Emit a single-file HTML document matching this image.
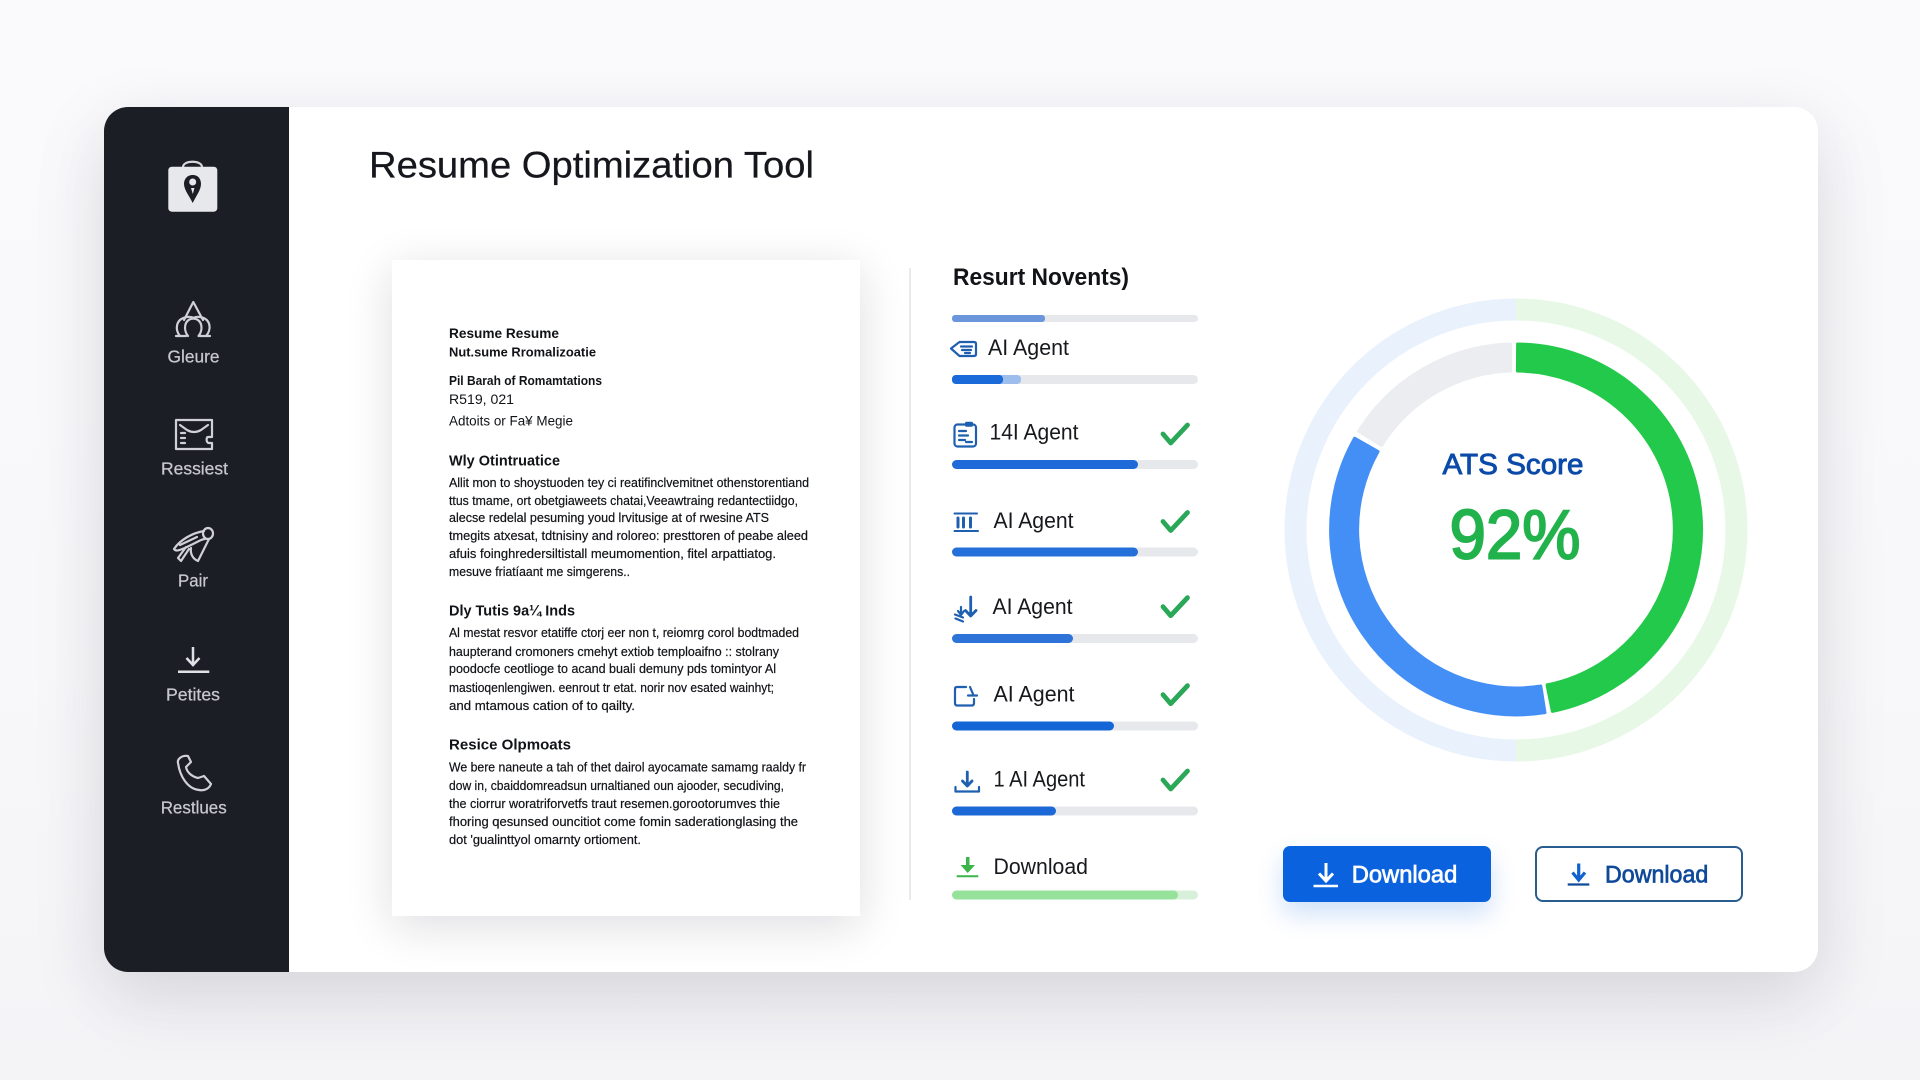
<!DOCTYPE html>
<html lang="en"><head><meta charset="utf-8"><title>Resume Optimization Tool</title>
<style>
html,body{margin:0;padding:0;width:1920px;height:1080px;overflow:hidden;background:linear-gradient(#fafafc 0,#f8f8fa 60%,#f4f4f7 100%);font-family:"Liberation Sans",sans-serif}
.a{position:absolute}
#card{left:104px;top:107px;width:1714px;height:865px;background:#fff;border-radius:24px;box-shadow:0 24px 70px rgba(25,25,45,.15)}
#side{left:104px;top:107px;width:185px;height:865px;background:#1c1e26;border-radius:24px 0 0 24px}
#paper{left:392px;top:260px;width:468px;height:656px;background:#fff;box-shadow:0 10px 44px rgba(20,20,40,.14)}
#b1{left:1283px;top:846px;width:208px;height:56px;background:#0a62de;border-radius:7px;box-shadow:0 12px 26px rgba(10,98,222,.2)}
#b2{left:1535px;top:846px;width:204px;height:52px;border:2px solid #2a5d8f;border-radius:8px;background:#fff}
svg{position:absolute;left:0;top:0}
text{font-family:"Liberation Sans",sans-serif}
</style></head><body>
<div class="a" id="card"></div><div class="a" id="side"></div><div class="a" id="paper"></div><div class="a" id="b1"></div><div class="a" id="b2"></div>
<svg width="1920" height="1080" viewBox="0 0 1920 1080">
<text x="369" y="177.500" font-size="37" fill="#15171c" stroke="#15171c" stroke-width=".25" textLength="445" lengthAdjust="spacingAndGlyphs">Resume Optimization Tool</text>

<!-- sidebar logo -->
<path d="M183 167C183 160 202 160 202 167" fill="none" stroke="#d6d7db" stroke-width="2.200"/>
<rect x="168.300" y="166.700" width="49" height="45" rx="3.500" fill="#e7e8eb"/>
<path d="M192.700 175C186.500 175 184 180 184 184C184 190 190 197 192.700 203C195.500 197 201 190 201 184C201 180 199 175 192.700 175Z" fill="#1c1e26"/>
<circle cx="192.700" cy="182" r="3.500" fill="#e7e8eb"/><path d="M191 188h3.500l-1.700 6z" fill="#e7e8eb"/>

<g fill="none" stroke="#cfd1d6" stroke-width="2.200" stroke-linecap="round" stroke-linejoin="round">
<path d="M184 320L193.300 302L203 320"/>
<path d="M176 336H186M180 336C175 330 175 319 187 317C190 316.500 192 317 194 318M210 336H200M206 336C211.500 330 211.500 319 200 317C197 316.500 195 317 193 318M188 336C183 330 184 319 193.300 318.500C202.500 319 203.500 330 198.500 336"/>
<path d="M176 420H212V437H208C206 437 206 443 209 443H212V449H176Z"/>
<path d="M180 425L187 430Q194 434 201 430L208 425M181 433H185M181 438H185M181 443H185"/>
<ellipse cx="208" cy="533.500" rx="5" ry="5.500"/>
<path d="M204 531C192 533 180 540 174 549C176 552 180 550 187 547L199 541C201 540 203 539 205 539M209 539C205 547 201 555 198 561C193 559 190 554 191 548M189 549L181 561L178 558L186 547M180 545L197 537"/>
<path d="M178 763C177 759 182 755 188 756L191 762L186 767C187 773 193 777 198 778L204 776L211 784C209 789 204 791 199 790C188 789 180 777 178 763Z"/>
</g>
<path d="M193 647V664M186.500 658L193 665L199.500 658" fill="none" stroke="#e0e1e5" stroke-width="2.500"/>
<path d="M178 671.700H209.300" stroke="#e0e1e5" stroke-width="2.500"/>
<g fill="#c6c8ce" stroke="#c6c8ce" stroke-width=".25" font-size="17.500">
<text x="167.500" y="362.500" textLength="52" lengthAdjust="spacingAndGlyphs">Gleure</text>
<text x="161" y="474.500" textLength="67" lengthAdjust="spacingAndGlyphs">Ressiest</text>
<text x="178" y="586.500" textLength="30" lengthAdjust="spacingAndGlyphs">Pair</text>
<text x="166" y="700.500" textLength="54" lengthAdjust="spacingAndGlyphs">Petites</text>
<text x="160.700" y="813.500" textLength="66" lengthAdjust="spacingAndGlyphs">Restlues</text>
</g>

<!-- resume text -->
<g fill="#111317">
<g font-weight="700">
<text x="449" y="338" font-size="14" textLength="110" lengthAdjust="spacingAndGlyphs">Resume Resume</text>
<text x="449" y="356.500" font-size="13" textLength="147" lengthAdjust="spacingAndGlyphs">Nut.sume Rromalizoatie</text>
<text x="449" y="385" font-size="13" textLength="153" lengthAdjust="spacingAndGlyphs">Pil Barah of Romamtations</text>
<text x="449" y="465.500" font-size="15" textLength="111" lengthAdjust="spacingAndGlyphs">Wly Otintruatice</text>
<text x="449" y="615.500" font-size="15" textLength="126" lengthAdjust="spacingAndGlyphs">Dly Tutis 9a¼ Inds</text>
<text x="449" y="749.500" font-size="15" textLength="122" lengthAdjust="spacingAndGlyphs">Resice Olpmoats</text>
</g>
<text x="449" y="404" font-size="14" textLength="65" lengthAdjust="spacingAndGlyphs">R519, 021</text>
<text x="449" y="425.500" font-size="13.500" textLength="124" lengthAdjust="spacingAndGlyphs">Adtoits or Fa¥ Megie</text>
<g font-size="12.800" stroke="#111317" stroke-width=".2">
<text x="449" y="487" textLength="360" lengthAdjust="spacingAndGlyphs">Allit mon to shoystuoden tey ci reatifinclvemitnet othenstorentiand</text>
<text x="449" y="505" textLength="349" lengthAdjust="spacingAndGlyphs">ttus tmame, ort obetgiaweets chatai,Veeawtraing redantectiidgo,</text>
<text x="449" y="522" textLength="320" lengthAdjust="spacingAndGlyphs">alecse redelal pesuming youd lrvitusige at of rwesine ATS</text>
<text x="449" y="540" textLength="359" lengthAdjust="spacingAndGlyphs">tmegits atxesat, tdtnisiny and roloreo: presttoren of peabe aleed</text>
<text x="449" y="558" textLength="327" lengthAdjust="spacingAndGlyphs">afuis foinghredersiltistall meumomention, fitel arpattiatog.</text>
<text x="449" y="576" textLength="181" lengthAdjust="spacingAndGlyphs">mesuve friatíaant me simgerens..</text>
<text x="449" y="637" textLength="350" lengthAdjust="spacingAndGlyphs">Al mestat resvor etatiffe ctorj eer non t, reiomrg corol bodtmaded</text>
<text x="449" y="656" textLength="330" lengthAdjust="spacingAndGlyphs">haupterand cromoners cmehyt extiob temploaifno :: stolrany</text>
<text x="449" y="673" textLength="327" lengthAdjust="spacingAndGlyphs">poodocfe ceotlioge to acand buali demuny pds tomintyor Al</text>
<text x="449" y="692" textLength="325" lengthAdjust="spacingAndGlyphs">mastioqenlengiwen. eenrout tr etat. norir nov esated wainhyt;</text>
<text x="449" y="710" textLength="186" lengthAdjust="spacingAndGlyphs">and  mtamous cation of to qailty.</text>
<text x="449" y="771.500" textLength="357" lengthAdjust="spacingAndGlyphs">We bere naneute a tah of thet dairol ayocamate samamg raaldy fr</text>
<text x="449" y="790" textLength="335" lengthAdjust="spacingAndGlyphs">dow in, cbaiddomreadsun urnaltianed oun ajooder, secudiving,</text>
<text x="449" y="808" textLength="331" lengthAdjust="spacingAndGlyphs">the ciorrur woratriforvetfs traut resemen.gorootorumves thie</text>
<text x="449" y="826" textLength="349" lengthAdjust="spacingAndGlyphs">fhoring qesunsed ouncitiot come fomin saderationglasing the</text>
<text x="449" y="844" textLength="192" lengthAdjust="spacingAndGlyphs">dot 'gualinttyol omarnty ortioment.</text>
</g></g>

<path d="M910 268V900" stroke="#e8eaee" stroke-width="2"/>

<!-- results -->
<text x="953" y="285" font-size="24" font-weight="700" fill="#111317" textLength="176" lengthAdjust="spacingAndGlyphs">Resurt Novents)</text>
<g fill="#e6e8ec">
<rect x="952" y="315" width="246" height="7" rx="3.500"/>
<rect x="952" y="375" width="246" height="9" rx="4.500"/>
<rect x="952" y="460" width="246" height="9" rx="4.500"/>
<rect x="952" y="547.500" width="246" height="9" rx="4.500"/>
<rect x="952" y="634" width="246" height="9" rx="4.500"/>
<rect x="952" y="721.500" width="246" height="9" rx="4.500"/>
<rect x="952" y="806.500" width="246" height="9" rx="4.500"/>
</g>
<rect x="952" y="890.500" width="246" height="9" rx="4.500" fill="#d8f0da"/>
<rect x="952" y="315" width="93" height="7" rx="3" fill="#6b96db"/>
<rect x="952" y="375" width="69" height="9" rx="4" fill="#9dbdec"/>
<rect x="952" y="375" width="51" height="9" rx="4" fill="#1a6ad9"/>
<rect x="952" y="460" width="186" height="9" rx="4.500" fill="#1d6ad8"/>
<rect x="952" y="547.500" width="186" height="9" rx="4.500" fill="#2370da"/>
<rect x="952" y="634" width="121" height="9" rx="4.500" fill="#2e74d8"/>
<rect x="952" y="721.500" width="162" height="9" rx="4.500" fill="#1466d6"/>
<rect x="952" y="806.500" width="104" height="9" rx="4.500" fill="#1c68d6"/>
<rect x="952" y="890.500" width="226" height="9" rx="4.500" fill="#96e29b"/>

<g font-size="22" fill="#17191d">
<text x="988" y="355" textLength="81" lengthAdjust="spacingAndGlyphs">AI Agent</text>
<text x="989.500" y="439.300" textLength="89" lengthAdjust="spacingAndGlyphs">14I Agent</text>
<text x="993.500" y="528" textLength="80" lengthAdjust="spacingAndGlyphs">AI Agent</text>
<text x="992.500" y="614" textLength="80" lengthAdjust="spacingAndGlyphs">AI Agent</text>
<text x="993.500" y="701.700" textLength="81" lengthAdjust="spacingAndGlyphs">AI Agent</text>
<text x="993.500" y="786.700" textLength="91.500" lengthAdjust="spacingAndGlyphs">1 AI Agent</text>
<text x="993.500" y="874" textLength="94.500" lengthAdjust="spacingAndGlyphs">Download</text>
</g>

<g fill="none" stroke="#2aa757" stroke-width="4.800" stroke-linecap="round" stroke-linejoin="round">
<path d="M1163 434L1170.700 443L1187.500 425"/>
<path d="M1163 521.500L1170.700 530.500L1187.500 512.500"/>
<path d="M1163 606.700L1170.700 615.700L1187.500 597.700"/>
<path d="M1163 694.700L1170.700 703.700L1187.500 685.700"/>
<path d="M1163 780L1170.700 789L1187.500 771"/>
</g>

<g fill="none" stroke="#1f5fb0" stroke-width="2.200" stroke-linecap="round" stroke-linejoin="round">
<path d="M959.500 342H974Q976 342 976 344V354Q976 356 974 356H959.500L951 348.500ZM961 346.500H972M962 350H971M965 353H970"/>
<rect x="954.500" y="424.500" width="21.500" height="22" rx="3"/>
<path d="M959 431H966M959 435.500H968M959 440H965M966 442H972"/>
<path d="M954.500 513.500H977M954.500 531H978" stroke-width="2"/>
<path d="M958 518V527M963.500 518V527M970.500 518V527" stroke-width="3"/>
<path d="M970.700 597V615M965.500 610.500L970.700 616L976 610.500" stroke-width="2.800"/>
<path d="M961 607V614M958 611L961 615L964 611M955 614.500L963 617.500M955.500 618.500L963 621.500"/>
<path d="M966 687H957Q955 687 955 689V703Q955 705.500 957 705.500H972Q974 705.500 974 703V699M970 687L973 694M968 695.500H977"/>
<path d="M967.300 772V785M962.500 781L967.300 786L972 781" stroke-width="2.800"/>
<path d="M955.500 787V791.500H979V787"/>
</g>
<rect x="965" y="421.700" width="8" height="5" rx="1.500" fill="#1f5fb0"/>
<path d="M966 857H969.500V865H975L967.700 873L960.500 865H966Z" fill="#3bb54a"/>
<path d="M956.700 876.300H978.300" stroke="#3bb54a" stroke-width="2"/>

<!-- rings -->
<path d="M1516 309.500A220.500 220.500 0 0 0 1516 750.500" fill="none" stroke="#e9f2fc" stroke-width="22"/>
<path d="M1516 309.500A220.500 220.500 0 0 1 1516 750.500" fill="none" stroke="#e7f8e7" stroke-width="22"/>
<g stroke-width="3" stroke-linejoin="round">
<path d="M1517.600 344A185.500 185.500 0 0 1 1552.400 711.400L1547 684.900A158.500 158.500 0 0 0 1517.400 371Z" fill="#22c94a" stroke="#22c94a"/>
<path d="M1545 712.700A185.500 185.500 0 0 1 1354.600 438.200L1378.100 451.500A158.500 158.500 0 0 0 1540.800 686Z" fill="#448ff5" stroke="#448ff5"/>
<path d="M1358.700 431.200A185.500 185.500 0 0 1 1510.700 344L1510.700 371A158.500 158.500 0 0 0 1381.600 445.500Z" fill="#ecedf1" stroke="#ecedf1"/>
</g>
<text x="1442.500" y="474" font-size="29" fill="#0b4aa8" stroke="#0b4aa8" stroke-width=".9" textLength="141" lengthAdjust="spacingAndGlyphs">ATS Score</text>
<text x="1449.500" y="558.500" font-size="70" fill="#22b24c" stroke="#22b24c" stroke-width="2" textLength="131" lengthAdjust="spacingAndGlyphs">92%</text>

<!-- buttons -->
<path d="M1326 863V880M1319 873.500L1326 881L1333 873.500" fill="none" stroke="#fff" stroke-width="3"/>
<path d="M1313.500 886H1338" stroke="#fff" stroke-width="2.500"/>
<text x="1351.700" y="882.500" font-size="24" fill="#fff" stroke="#fff" stroke-width=".7" textLength="105.600" lengthAdjust="spacingAndGlyphs">Download</text>
<path d="M1578.700 863.500V878M1572.500 872.500L1578.700 880L1585 872.500" fill="none" stroke="#0f62cf" stroke-width="3.200"/>
<path d="M1567.700 884.500H1589.300" stroke="#0f4a9a" stroke-width="2.200"/>
<text x="1605" y="882.500" font-size="24" fill="#0f4a9a" stroke="#0f4a9a" stroke-width=".7" textLength="103.300" lengthAdjust="spacingAndGlyphs">Download</text>
</svg>
</body></html>
